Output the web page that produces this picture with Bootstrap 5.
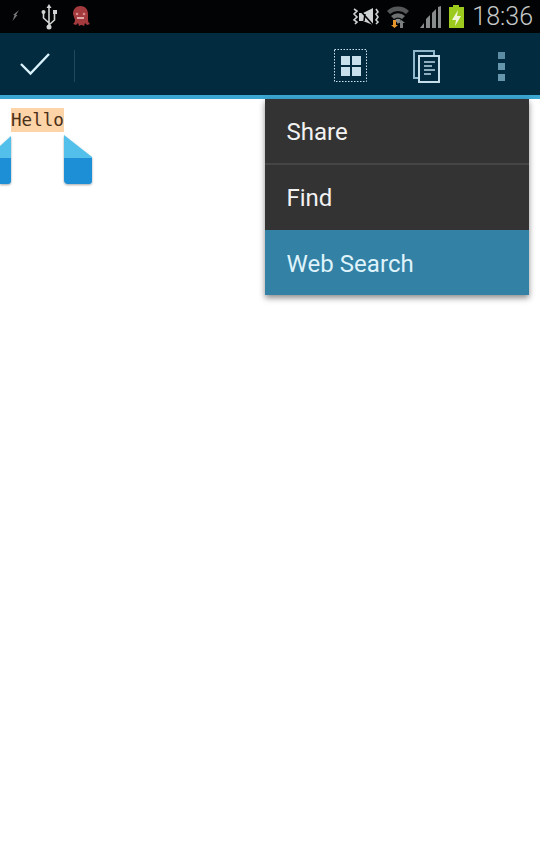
<!DOCTYPE html>
<html><head><meta charset="utf-8">
<link rel="stylesheet" href="https://cdn.jsdelivr.net/npm/bootstrap@5.3.0/dist/css/bootstrap.min.css">
<style>
html,body{margin:0;height:100%;background:#fff;overflow:hidden}
.phone{width:540px;height:864px;position:relative;font-family:Roboto,sans-serif}
.statusbar{height:33px;background:#020304;padding:0 7px 0 0}
.clock{font-family:Roboto,sans-serif;font-weight:300;font-size:25px;color:#c6c8c8;line-height:33px;margin-left:2px}
.actionbar{height:66px;background:#022b40;border-bottom:4px solid #3aa6d1}
.donebtn{width:75px;height:100%;position:relative}
.donebtn::after{content:"";position:absolute;right:0;top:17px;height:32px;width:1px;background:#1d4a60}
.stext{position:absolute;left:11px;top:108px;height:24px;width:53px;background:#fdd3a8;color:#4a3018;font:17.6px/24px "DejaVu Sans Mono","Liberation Mono",monospace;overflow:hidden;white-space:nowrap}
.handle{position:absolute;top:134px;left:0}
.popup{position:absolute;left:265px;top:99px;width:264px;background:#333;box-shadow:0 3px 6px rgba(0,0,0,.45)}
.popitem{height:64px;padding-left:21.500px;font-size:24px;line-height:66px;color:#f2f2f2}
.popdiv{height:2px;background:#454545}
.popitem.sel{height:65px;background:#3381a5;color:#dff3fb;line-height:69px;letter-spacing:.05px}
.popitem.mid{height:65px;line-height:67px}
</style></head><body>
<div class="phone">
 <div class="statusbar d-flex align-items-center">
  <svg width="96" height="33" viewBox="0 0 96 33">
   <path d="M19 10l-3 5 1.500 0-5 6 2-6-1.500 0z" fill="#777"/>
   <g stroke="#d3d5d5" stroke-width="1.600" fill="none"><path d="M49 6V28M49 23L43.500 18V13M49 25L54.500 20V13"/></g>
   <path d="M49 4l2.500 4h-5z" fill="#d3d5d5"/><circle cx="49" cy="27" r="2.500" fill="#d3d5d5"/><circle cx="43.500" cy="12" r="2" fill="#d3d5d5"/><rect x="53" y="10" width="4" height="4" fill="#d3d5d5"/>
   <path d="M73 14c0-5 3-8 7.500-8s7.500 3 7.500 8v6c0 2 1 3 2 4l-3 1-2-2-1 3-2-1-1 0-2 1-1-3-2 2-3-1c1-1 2-2 2-4z" fill="#a33a3e"/>
   <circle cx="77" cy="14" r="1.300" fill="#d98a8a"/><circle cx="84" cy="14" r="1.300" fill="#d98a8a"/><rect x="77" y="17" width="7" height="2" fill="#e0aaaa"/>
  </svg>
  <div class="flex-grow-1"></div>
  <svg width="120" height="33" viewBox="0 0 120 33">
   <path d="M9 13h4l10-5v17l-10-4h-4z" fill="#cfd2d2"/>
   <path d="M4 9l3 2-3 3 3 3-3 3 3 2-2 2M26 9l2 3-2 2 2 3-2 3 2 2-2 2" fill="none" stroke="#cfd2d2" stroke-width="1.600"/>
   <path d="M8 8L24 26M15 14L14 21" stroke="#020304" stroke-width="1.600"/>
   <path d="M37 11a16 16 0 0 1 22 0l-3 3a12 12 0 0 0-16 0z" fill="#555858"/><path d="M41 16a10 10 0 0 1 14 0l-3 3a6 6 0 0 0-8 0z" fill="#6d7070"/><path d="M48 24l-3-4a4 4 0 0 1 6 0z" fill="#8a8d8d"/>
   <path d="M43 20h3v5h2l-3.500 3-3.500-3h2z" fill="#e8962b"/><path d="M50 28v-5h-2l3.500-3 3.500 3h-2v5z" fill="#7c7f7f"/>
   <path d="M70 28l4-5v5zM76 28v-9l4-4v13zM82 28V13l4-4v19zM88 28V7l3-1v22z" fill="#888b8b"/>
   <rect x="103" y="5" width="6" height="3" fill="#9ccb1e"/><rect x="99" y="7" width="15" height="21" fill="#9ccb1e"/><path d="M108 10l-6 10h4l-1 6 6-10h-4z" fill="#f0f5d8"/>
  </svg>
  <span class="clock">18:36</span>
 </div>
 <div class="actionbar d-flex align-items-center">
  <div class="donebtn d-flex align-items-center">
   <svg class="ms-3" width="38" height="26" viewBox="0 0 38 26"><path d="M5 13l9.500 9.500L33 3" fill="none" stroke="#d9f2fb" stroke-width="2.400"/></svg>
  </div>
  <div class="flex-grow-1"></div>
  <svg class="handlebox" width="204" height="62" viewBox="0 0 204 62" style="margin-right:3px">
   <rect x="1.500" y="16.500" width="32" height="32" fill="none" stroke="#cfe3ee" stroke-width="1" stroke-dasharray="1.500 1.500"/>
   <g fill="#c8dfec"><rect x="8" y="23" width="9" height="9"/><rect x="19" y="23" width="9" height="9"/><rect x="8" y="34" width="9" height="9"/><rect x="19" y="34" width="9" height="9"/></g>
   <g fill="none" stroke="#8fb8cc" stroke-width="2"><path d="M85 45H81V18H101V23"/><rect x="86" y="23" width="20" height="26" fill="#022b40" stroke="#c4dde9"/></g>
   <g stroke="#bcd8e6" stroke-width="1.400"><path d="M91 29h11M91 33h8M91 37h11M91 41h7"/></g>
   <rect x="165" y="19" width="7" height="7" fill="#5b8ca3"/><rect x="165" y="30" width="7" height="7" fill="#6596ac"/><rect x="165" y="41" width="7" height="7" fill="#6596ac"/>
  </svg>
 </div>
 <div class="stext">Hello</div>
 <svg class="handle" width="96" height="54" viewBox="0 0 96 54">
  <defs><filter id="sh"><feDropShadow dx="0" dy="1" stdDeviation="1" flood-opacity=".35"/></filter></defs>
  <g filter="url(#sh)"><path d="M0 12L11 2V24H0z" fill="#53c0ec"/><path d="M0 24H11V47a3 3 0 0 1-3 3H0z" fill="#1f8fd6"/>
  <path d="M64 1L92 23V24H64z" fill="#53c0ec"/><path d="M64 24H92V47a3 3 0 0 1-3 3H68a4 4 0 0 1-4-4z" fill="#1f8fd6"/></g>
 </svg>
 <div class="popup">
  <div class="popitem">Share</div>
  <div class="popdiv"></div>
  <div class="popitem mid">Find</div>
  <div class="popitem sel">Web Search</div>
 </div>
</div>
</body></html>
